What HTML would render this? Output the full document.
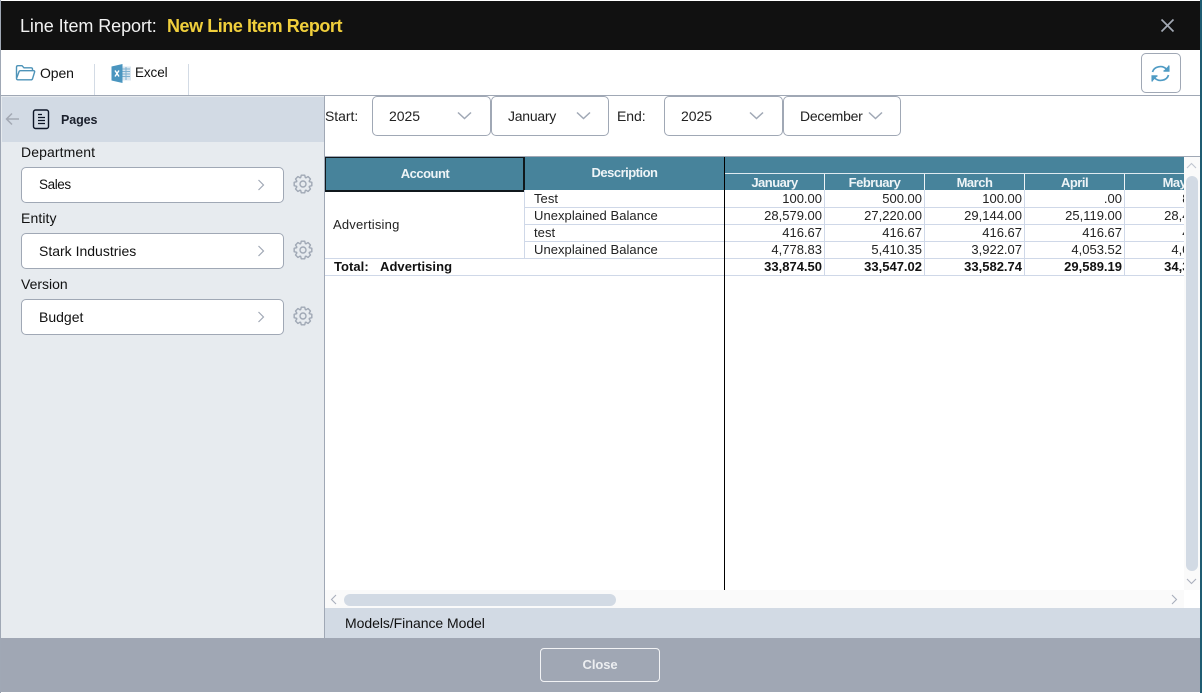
<!DOCTYPE html>
<html><head><meta charset="utf-8">
<style>
html,body{margin:0;padding:0;width:1202px;height:693px;overflow:hidden;background:#fff}
*{box-sizing:border-box}
.a{position:absolute;white-space:nowrap}
.l{font-family:"Liberation Sans",sans-serif;font-size:14px;color:#111;line-height:16px}
.t{font-family:"Liberation Sans",sans-serif;font-size:13px;color:#222;line-height:16px;letter-spacing:.05px}
.s{font-size:14px;letter-spacing:-.05px;top:108px}
.box{position:absolute;background:#fff;border:1px solid #a0a8b5;border-radius:5px}
.h{font-family:"Liberation Sans",sans-serif;font-size:13px;font-weight:bold;color:#eef4f7;line-height:16px;text-align:center;position:absolute;letter-spacing:-.5px}
.n{position:absolute;text-align:right;width:97px;font-family:"Liberation Sans",sans-serif;font-size:13px;line-height:16px;color:#222}
.b{font-weight:bold;color:#111}
.hl{position:absolute;height:1px;background:#cfd8e8}
.vl{position:absolute;width:1px;background:#cfd8e8}
</style></head>
<body>
<svg width="0" height="0" style="position:absolute"><defs><g id="gear" fill="none" stroke="#a0a8b5" stroke-width="1.4" stroke-linejoin="round"><circle cx="10" cy="10" r="3"/><polygon points="8.28,1.17 11.72,1.17 12.33,3.61 12.87,3.84 15.03,2.54 17.46,4.97 16.16,7.13 16.39,7.67 18.83,8.28 18.83,11.72 16.39,12.33 16.16,12.87 17.46,15.03 15.03,17.46 12.87,16.16 12.33,16.39 11.72,18.83 8.28,18.83 7.67,16.39 7.13,16.16 4.97,17.46 2.54,15.03 3.84,12.87 3.61,12.33 1.17,11.72 1.17,8.28 3.61,7.67 3.84,7.13 2.54,4.97 4.97,2.54 7.13,3.84 7.67,3.61"/></g></defs></svg>
<div class="a" style="left:0;top:0;width:1202px;height:693px;background:#fff;overflow:hidden">
<!-- title bar -->
<div class="a" style="left:1px;top:1px;width:1199px;height:49px;background:#111"></div>
<div class="a" style="left:20px;top:15px;font:18px/22px 'Liberation Sans',sans-serif;color:#f2f2f2;letter-spacing:-.08px">Line Item Report:</div>
<div class="a" style="left:167px;top:15px;font:bold 18px/22px 'Liberation Sans',sans-serif;color:#f0cf3c;letter-spacing:-.45px">New Line Item Report</div>
<svg class="a" style="left:1160px;top:18px" width="15" height="15" viewBox="0 0 15 15"><path d="M1.5 1.5L13.5 13.5M13.5 1.5L1.5 13.5" stroke="#a3a9b4" stroke-width="1.7"/></svg>
<!-- edges -->
<div class="a" style="left:0;top:0;width:1px;height:693px;background:#a0a8b5"></div>
<div class="a" style="left:1200px;top:0;width:2px;height:693px;background:#1f5c72"></div>
<!-- toolbar -->
<svg class="a" style="left:15px;top:64px" width="21" height="18" viewBox="0 0 21 18" fill="none" stroke="#4d93b8" stroke-width="1.4"><path d="M1.5 14V3.2Q1.5 1.7 3 1.7H7L9 3.8H16Q17.5 3.8 17.5 5.2V6.5"/><path d="M1.5 14.5L4 7.8Q4.3 6.7 5.5 6.7H18.5Q20 6.7 19.6 8L17.6 14.6Q17.2 15.8 16 15.8H3Q1.5 15.8 1.5 14.5Z"/></svg>
<div class="a l" style="left:40px;top:65px;letter-spacing:-.1px">Open</div>
<div class="a" style="left:94px;top:64px;width:1px;height:31px;background:#d3dbe5"></div>
<svg class="a" style="left:111px;top:64px" width="21" height="19" viewBox="0 0 21 19"><rect x="9" y="2.5" width="11" height="14" fill="#dbe7f0"/><path d="M11 5h8M11 7.5h8M11 10h8M11 12.5h8M15 3v13" stroke="#7fb0cf" stroke-width="1"/><path d="M0.5 2.5L11.5 0V19L0.5 16.5Z" fill="#4a95bf"/><path d="M4 6.5L8 12.5M8 6.5L4 12.5" stroke="#fff" stroke-width="1.4"/></svg>
<div class="a l" style="left:135px;top:65px;font-size:13.5px;letter-spacing:-.1px">Excel</div>
<div class="a" style="left:188px;top:64px;width:1px;height:31px;background:#d3dbe5"></div>
<div class="box" style="left:1141px;top:53px;width:40px;height:40px"></div>
<svg class="a" style="left:1150px;top:64px" width="21" height="19" viewBox="0 0 21 19" fill="none" stroke="#4f9bc4" stroke-width="1.7"><path d="M2.5 8A8 7 0 0 1 16.5 5.2"/><path d="M18.5 11A8 7 0 0 1 4.5 13.8"/><path d="M18.8 1.5V7H13.5" stroke-width="1.5" fill="#4f9bc4"/><path d="M2.2 17.5V12H7.5" stroke-width="1.5" fill="#4f9bc4"/></svg>
<div class="a" style="left:1px;top:95px;width:1199px;height:1px;background:#a0a8b5"></div>
<!-- sidebar -->
<div class="a" style="left:1px;top:96px;width:323px;height:542px;background:#e7ebef"></div>
<div class="a" style="left:2px;top:97px;width:322px;height:45px;background:#d2dae4"></div>
<div class="a" style="left:324px;top:96px;width:1px;height:542px;background:#a0a8b5"></div>
<svg class="a" style="left:5px;top:112px" width="15" height="14" viewBox="0 0 15 14" fill="none" stroke="#a3a9b4" stroke-width="1.5"><path d="M14 7H1.5M7 1.5L1.5 7L7 12.5"/></svg>
<svg class="a" style="left:32px;top:109px" width="18" height="21" viewBox="0 0 18 21" fill="none" stroke="#0d1526" stroke-width="1.4"><rect x="1.5" y="1" width="15" height="18.5" rx="2"/><path d="M6 5.5h4M6 8.5h7M6 11.5h7M6 14.5h7" stroke-width="1.2"/></svg>
<div class="a l" style="left:61px;top:112px;font-weight:bold;font-size:12.5px;letter-spacing:-.1px;color:#1a1f2b">Pages</div>

<div class="a l" style="left:21px;top:144px;letter-spacing:.1px">Department</div>
<div class="box" style="left:21px;top:167px;width:263px;height:36px"></div>
<div class="a l" style="left:39px;top:177px;font-size:13.5px;letter-spacing:-.4px">Sales</div>
<div class="a l" style="left:21px;top:210px;letter-spacing:.1px">Entity</div>
<div class="box" style="left:21px;top:233px;width:263px;height:36px"></div>
<div class="a l" style="left:39px;top:243px">Stark Industries</div>
<div class="a l" style="left:21px;top:276px">Version</div>
<div class="box" style="left:21px;top:299px;width:263px;height:36px"></div>
<div class="a l" style="left:39px;top:309px">Budget</div>
<svg class="a" style="left:257px;top:179px" width="8" height="12" viewBox="0 0 8 12" fill="none" stroke="#a0a8b5" stroke-width="1.2"><path d="M1.5 1L6.5 6L1.5 11"/></svg>
<svg class="a" style="left:257px;top:245px" width="8" height="12" viewBox="0 0 8 12" fill="none" stroke="#a0a8b5" stroke-width="1.2"><path d="M1.5 1L6.5 6L1.5 11"/></svg>
<svg class="a" style="left:257px;top:311px" width="8" height="12" viewBox="0 0 8 12" fill="none" stroke="#a0a8b5" stroke-width="1.2"><path d="M1.5 1L6.5 6L1.5 11"/></svg>
<svg class="a" style="left:293px;top:174px" width="20" height="20" viewBox="0 0 20 20"><use href="#gear"/></svg>
<svg class="a" style="left:293px;top:240px" width="20" height="20" viewBox="0 0 20 20"><use href="#gear"/></svg>
<svg class="a" style="left:293px;top:306px" width="20" height="20" viewBox="0 0 20 20"><use href="#gear"/></svg>

<!-- selectors -->
<div class="a t s" style="left:325px">Start:</div>
<div class="box" style="left:372px;top:96px;width:119px;height:40px"></div>
<div class="a t s" style="left:389px">2025</div>
<div class="box" style="left:491px;top:96px;width:118px;height:40px"></div>
<div class="a t s" style="left:508px;letter-spacing:-.25px">January</div>
<div class="a t s" style="left:617px">End:</div>
<div class="box" style="left:664px;top:96px;width:119px;height:40px"></div>
<div class="a t s" style="left:681px">2025</div>
<div class="box" style="left:783px;top:96px;width:118px;height:40px"></div>
<div class="a t s" style="left:800px;letter-spacing:-.25px">December</div>
<svg class="a" style="left:457px;top:111px" width="15" height="9" viewBox="0 0 15 9" fill="none" stroke="#a0a8b5" stroke-width="1.5"><path d="M1 1.5L7.5 7.5L14 1.5"/></svg>
<svg class="a" style="left:576px;top:111px" width="15" height="9" viewBox="0 0 15 9" fill="none" stroke="#a0a8b5" stroke-width="1.5"><path d="M1 1.5L7.5 7.5L14 1.5"/></svg>
<svg class="a" style="left:749px;top:111px" width="15" height="9" viewBox="0 0 15 9" fill="none" stroke="#a0a8b5" stroke-width="1.5"><path d="M1 1.5L7.5 7.5L14 1.5"/></svg>
<svg class="a" style="left:868px;top:111px" width="15" height="9" viewBox="0 0 15 9" fill="none" stroke="#a0a8b5" stroke-width="1.5"><path d="M1 1.5L7.5 7.5L14 1.5"/></svg>

<!-- grid -->
<div class="a" style="left:325px;top:156px;width:875px;height:1px;background:#a0a8b5"></div>
<div class="a" style="left:325px;top:157px;width:859px;height:433px;overflow:hidden">
  <div class="a" style="left:0;top:0;width:859px;height:33px;background:#47839b"></div>
  <div class="a" style="left:0;top:0;width:200px;height:35px;border:1px solid #10181c;border-width:1px 2px 2px 1px"></div>
  <div class="h" style="left:0;top:9px;width:200px">Account</div>
  <div class="h" style="left:200px;top:8px;width:199px">Description</div>
  <div class="a" style="left:400px;top:16px;width:459px;height:1px;background:#dfeaf0"></div>
  <div class="h" style="left:400px;top:18px;width:99px">January</div>
  <div class="h" style="left:500px;top:18px;width:99px">February</div>
  <div class="h" style="left:600px;top:18px;width:99px">March</div>
  <div class="h" style="left:700px;top:18px;width:99px">April</div>
  <div class="h" style="left:800px;top:18px;width:99px">May</div>
  <div class="vl" style="left:499px;top:17px;height:16px;background:#eef4f7"></div>
  <div class="vl" style="left:599px;top:17px;height:16px;background:#eef4f7"></div>
  <div class="vl" style="left:699px;top:17px;height:16px;background:#eef4f7"></div>
  <div class="vl" style="left:799px;top:17px;height:16px;background:#eef4f7"></div>

  <div class="hl" style="left:199px;top:50px;width:660px"></div>
  <div class="hl" style="left:199px;top:67px;width:660px"></div>
  <div class="hl" style="left:199px;top:84px;width:660px"></div>
  <div class="hl" style="left:0;top:101px;width:859px"></div>
  <div class="hl" style="left:0;top:118px;width:859px"></div>
  <div class="vl" style="left:199px;top:33px;height:68px"></div>
  <div class="vl" style="left:499px;top:33px;height:85px"></div>
  <div class="vl" style="left:599px;top:33px;height:85px"></div>
  <div class="vl" style="left:699px;top:33px;height:85px"></div>
  <div class="vl" style="left:799px;top:33px;height:85px"></div>

  <div class="a t" style="left:8px;top:60px;letter-spacing:.2px">Advertising</div>
  <div class="a t" style="left:209px;top:34px">Test</div>
  <div class="a t" style="left:209px;top:51px">Unexplained Balance</div>
  <div class="a t" style="left:209px;top:68px">test</div>
  <div class="a t" style="left:209px;top:85px">Unexplained Balance</div>
  <div class="a t b" style="left:9px;top:102px">Total:</div>
  <div class="a t b" style="left:55px;top:102px">Advertising</div>

  <div class="n" style="left:400px;top:34px">100.00</div><div class="n" style="left:500px;top:34px">500.00</div><div class="n" style="left:600px;top:34px">100.00</div><div class="n" style="left:700px;top:34px">.00</div><div class="n" style="left:800px;top:34px">800.00</div>
  <div class="n" style="left:400px;top:51px">28,579.00</div><div class="n" style="left:500px;top:51px">27,220.00</div><div class="n" style="left:600px;top:51px">29,144.00</div><div class="n" style="left:700px;top:51px">25,119.00</div><div class="n" style="left:800px;top:51px">28,400.00</div>
  <div class="n" style="left:400px;top:68px">416.67</div><div class="n" style="left:500px;top:68px">416.67</div><div class="n" style="left:600px;top:68px">416.67</div><div class="n" style="left:700px;top:68px">416.67</div><div class="n" style="left:800px;top:68px">416.67</div>
  <div class="n" style="left:400px;top:85px">4,778.83</div><div class="n" style="left:500px;top:85px">5,410.35</div><div class="n" style="left:600px;top:85px">3,922.07</div><div class="n" style="left:700px;top:85px">4,053.52</div><div class="n" style="left:800px;top:85px">4,000.00</div>
  <div class="n b" style="left:400px;top:102px">33,874.50</div><div class="n b" style="left:500px;top:102px">33,547.02</div><div class="n b" style="left:600px;top:102px">33,582.74</div><div class="n b" style="left:700px;top:102px">29,589.19</div><div class="n b" style="left:800px;top:102px">34,300.00</div>
  <div class="a" style="left:399px;top:0;width:1px;height:433px;background:#000"></div>
</div>
<!-- scrollbars -->
<div class="a" style="left:1184px;top:157px;width:16px;height:433px;background:#fafafa"></div>
<div class="a" style="left:1186px;top:176px;width:12px;height:395px;border-radius:6px;background:#d2dae4"></div>
<svg class="a" style="left:1186px;top:162px" width="11" height="7" viewBox="0 0 11 7" fill="none" stroke="#c0c6d0" stroke-width="1.1"><path d="M1 6L5.5 1.5L10 6"/></svg>
<svg class="a" style="left:1186px;top:578px" width="11" height="7" viewBox="0 0 11 7" fill="none" stroke="#a9afbc" stroke-width="1.1"><path d="M1 1L5.5 5.5L10 1"/></svg>
<div class="a" style="left:325px;top:590px;width:859px;height:18px;background:#fafafa"></div>
<div class="a" style="left:344px;top:594px;width:272px;height:12px;border-radius:6px;background:#d2dae4"></div>
<svg class="a" style="left:330px;top:594px" width="7" height="11" viewBox="0 0 7 11" fill="none" stroke="#a9afbc" stroke-width="1.1"><path d="M6 1L1.5 5.5L6 10"/></svg>
<svg class="a" style="left:1171px;top:594px" width="7" height="11" viewBox="0 0 7 11" fill="none" stroke="#a9afbc" stroke-width="1.1"><path d="M1 1L5.5 5.5L1 10"/></svg>
<!-- path bar -->
<div class="a" style="left:325px;top:608px;width:875px;height:30px;background:#d2dae4"></div>
<div class="a l" style="left:345px;top:615px;letter-spacing:-.05px">Models/Finance Model</div>
<!-- footer -->
<div class="a" style="left:1px;top:638px;width:1199px;height:54px;background:#a0a7b4"></div>
<div class="a" style="left:540px;top:648px;width:120px;height:34px;border:1px solid #f2f3f5;border-radius:4px;text-align:center;font:bold 13px/32px 'Liberation Sans',sans-serif;color:#eceef1;letter-spacing:-.1px">Close</div>
</div>
</body></html>
